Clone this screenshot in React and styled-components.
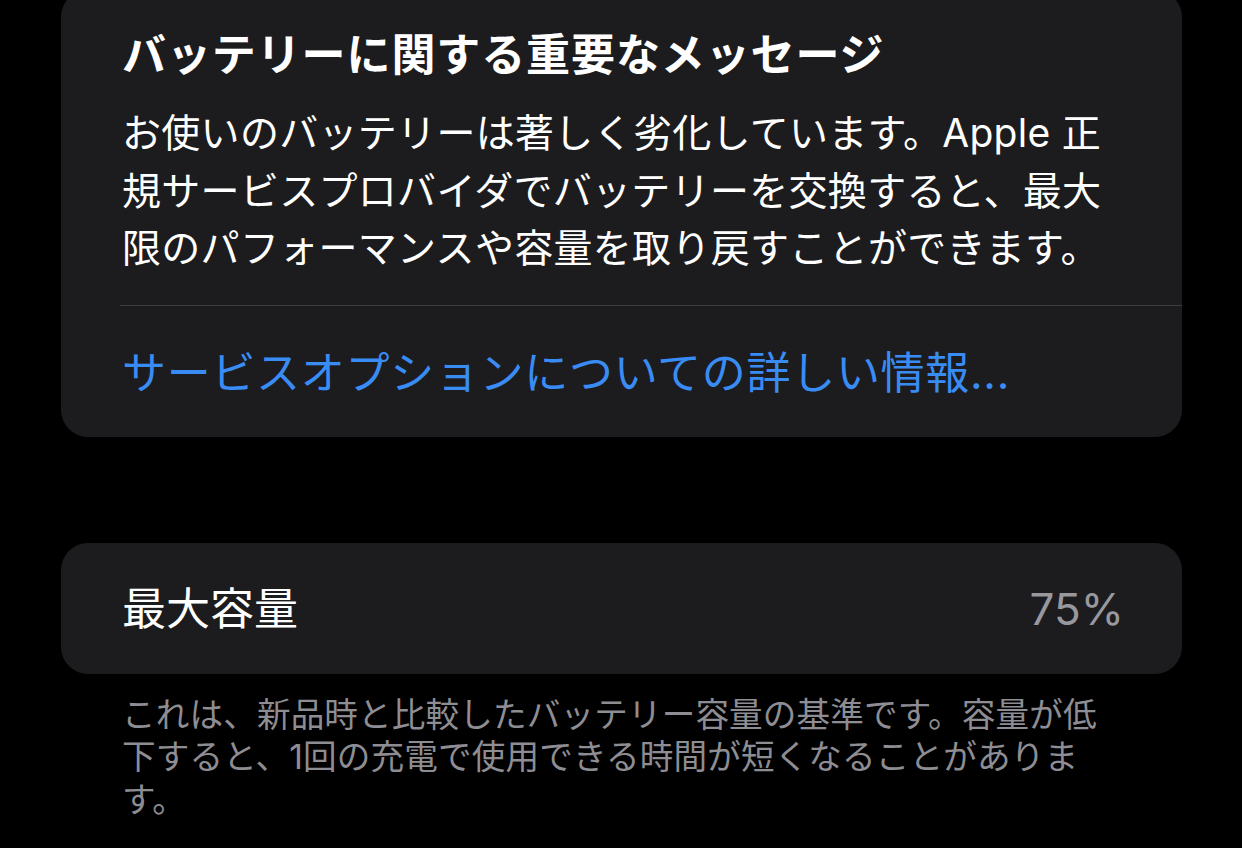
import React from 'react';
import styled, { createGlobalStyle } from 'styled-components';

const GlobalStyle = createGlobalStyle`
    html, body {
        margin: 0;
        padding: 0;
        background: #000;
    }
    body {
        font-family: "Inter", "Noto Sans CJK JP", sans-serif;
        color: #fff;
        overflow: hidden;
    }
`;

const Page = styled.div`
    width: 1242px;
    height: 848px;
    box-sizing: border-box;
    padding: 0 60px 0 61px;
    margin-top: -10px;
    display: flex;
    flex-direction: column;
`;

const Card = styled.section`
    background: #1c1c1e;
    border-radius: 27px;
    overflow: hidden;
    margin-top: ${p => p.$gap || 0}px;
`;

const Message = styled.div`
    padding: 39px 61px 28px 61px;
    display: flex;
    flex-direction: column;
    gap: 23px;
`;

const Title = styled.h2`
    margin: 0;
    font-size: 44px;
    line-height: 52px;
    font-weight: 700;
    letter-spacing: 0.9px;
`;

const Body = styled.p`
    margin: 0;
    font-size: 39px;
    line-height: 57.5px;
    font-weight: 400;
    letter-spacing: 0.3px;
`;

const Line = styled.span`
    display: block;
    white-space: nowrap;
`;

const Separator = styled.div`
    height: 1px;
    margin-left: 59px;
    background: #3d3d41;
`;

const LinkRow = styled.a`
    display: block;
    padding: 41px 61px 38px 61px;
    font-size: 44px;
    line-height: 52px;
    letter-spacing: 0.7px;
    color: #3a8cf5;
    text-decoration: none;
    white-space: nowrap;
`;

const Row = styled.div`
    display: flex;
    align-items: center;
    justify-content: space-between;
    padding: 40px 58px 39px 61px;
    font-size: 44px;
    line-height: 52px;
`;

const Value = styled.span`
    color: #98989f;
`;

const Footnote = styled.p`
    margin: 20px 0 0 0;
    padding: 0 61px;
    font-size: 33.6px;
    line-height: 42.5px;
    letter-spacing: 0.15px;
    color: #8d8d93;
`;

const App = () => {
    return (
        <>
            <GlobalStyle />
            <Page>
                <Card>
                    <Message>
                        <Title>バッテリーに関する重要なメッセージ</Title>
                        <Body>
                            <Line>お使いのバッテリーは著しく劣化しています。Apple 正</Line>
                            <Line>規サービスプロバイダでバッテリーを交換すると、最大</Line>
                            <Line>限のパフォーマンスや容量を取り戻すことができます。</Line>
                        </Body>
                    </Message>
                    <Separator />
                    <LinkRow href="#">サービスオプションについての詳しい情報...</LinkRow>
                </Card>

                <Card $gap={106}>
                    <Row>
                        <span>最大容量</span>
                        <Value>75%</Value>
                    </Row>
                </Card>

                <Footnote>
                    <Line>これは、新品時と比較したバッテリー容量の基準です。容量が低</Line>
                    <Line>下すると、1回の充電で使用できる時間が短くなることがありま</Line>
                    <Line>す。</Line>
                </Footnote>
            </Page>
        </>
    );
};

export default App;
